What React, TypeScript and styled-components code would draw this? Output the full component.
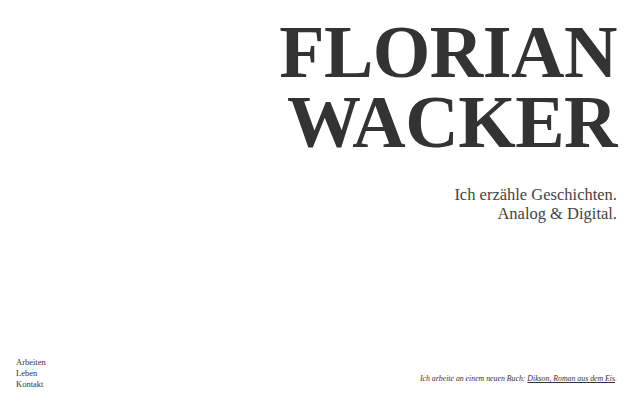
import React from "react";
import styled, { createGlobalStyle } from "styled-components";

const GlobalStyle = createGlobalStyle`
  html, body {
    margin: 0;
    padding: 0;
    background: #ffffff;
  }
  body {
    font-family: "Liberation Serif", "DejaVu Serif", serif;
    color: #333333;
  }
`;

const navItems = ["Arbeiten", "Leben", "Kontakt"];

const App: React.FC = () => {
  return (
    <>
      <GlobalStyle />
      <Page>
        <Header>
          <Name>
            <NameLine>FLORIAN</NameLine>
            <NameLine>WACKER</NameLine>
          </Name>
          <Tagline>
            <TagLine>Ich erzähle Geschichten.</TagLine>
            <TagLine>Analog &amp; Digital.</TagLine>
          </Tagline>
        </Header>
        <Footer>
          <Nav>
            {navItems.map((item) => (
              <NavLink key={item} href="#">
                {item}
              </NavLink>
            ))}
          </Nav>
          <News>
            Ich arbeite an einem neuen Buch: <BookLink href="#">Dikson, Roman aus dem Eis</BookLink>.
          </News>
        </Footer>
      </Page>
    </>
  );
};

export default App;

const Page = styled.div`
  width: 640px;
  height: 412px;
  box-sizing: border-box;
  padding: 0 23px 22px 16px;
  display: flex;
  flex-direction: column;
  justify-content: space-between;
  overflow: hidden;
`;

const Header = styled.header`
  display: flex;
  flex-direction: column;
  align-items: flex-end;
  text-align: right;
`;

const Name = styled.h1`
  margin: 17px 0 0;
  display: flex;
  flex-direction: column;
  align-items: flex-end;
  font-size: 74px;
  font-weight: 700;
  letter-spacing: -0.5px;
  color: #333333;
`;

const NameLine = styled.span`
  display: block;
  height: 70px;
  line-height: 70px;
  overflow: visible;
`;

const Tagline = styled.p`
  margin: 28px 0 0;
  display: flex;
  flex-direction: column;
  align-items: flex-end;
  font-size: 16.5px;
  color: #444444;
`;

const TagLine = styled.span`
  display: block;
  line-height: 19px;
`;

const Footer = styled.footer`
  display: flex;
  justify-content: space-between;
  align-items: flex-end;
`;

const Nav = styled.nav`
  display: flex;
  flex-direction: column;
`;

const NavLink = styled.a`
  font-size: 8.5px;
  line-height: 11px;
  color: #333333;
  text-decoration: none;
`;

const News = styled.p`
  margin: 0 0 6px;
  font-size: 7.8px;
  font-style: italic;
  line-height: 11px;
  color: #333333;
`;

const BookLink = styled.a`
  color: #333333;
  text-decoration: underline;
`;
